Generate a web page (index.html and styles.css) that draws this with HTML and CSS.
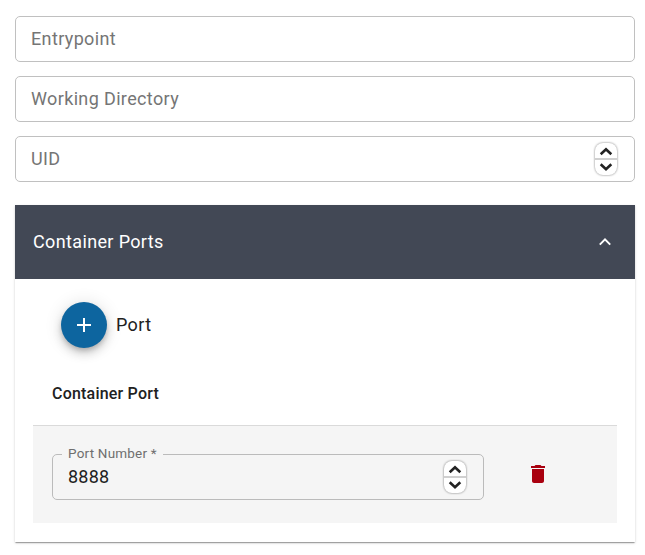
FILE: index.html
```html
<!DOCTYPE html>
<html lang="en">
<head>
<meta charset="utf-8">
<title>Container settings</title>
<link rel="stylesheet" href="styles.css">
</head>
<body>
<main class="form">
  <div class="field"><span class="label">Entrypoint</span></div>
  <div class="field"><span class="label">Working Directory</span></div>
  <div class="field">
    <span class="label">UID</span>
    <svg class="stepper" viewBox="0 0 24 34"><rect class="pill" x="1" y="1" width="22" height="32" rx="8"/><path class="divider" d="M1 17h22"/><path class="arrow" d="M6.700 12.300 12 7.200l5.300 5.100M6.700 22.200l5.300 5.100 5.300-5.100"/></svg>
  </div>
  <section class="panel">
    <header class="panel-header">
      <span>Container Ports</span>
      <svg class="chevron" viewBox="0 0 14 10"><path d="m1.800 7.600 5.200-5.200 5.200 5.200"/></svg>
    </header>
    <div class="panel-body">
      <div class="add-row">
        <button class="add" aria-label="Add port"><svg viewBox="0 0 14 14"><path d="M0 7h14M7 0v14"/></svg></button>
        <span>Port</span>
      </div>
      <div class="column-title">Container Port</div>
      <div class="port-row">
        <fieldset class="port-field">
          <legend>Port Number *</legend>
          <span class="value">8888</span>
          <svg class="stepper" viewBox="0 0 24 34"><rect class="pill" x="1" y="1" width="22" height="32" rx="8"/><path class="divider" d="M1 17h22"/><path class="arrow" d="M6.700 12.300 12 7.200l5.300 5.100M6.700 22.200l5.300 5.100 5.300-5.100"/></svg>
        </fieldset>
        <svg class="trash" viewBox="5 3 14 18"><path d="M6 19c0 1.100.9 2 2 2h8c1.100 0 2-.9 2-2V7H6v12zM19 4h-3.500l-1-1h-5l-1 1H5v2h14V4z"/></svg>
      </div>
    </div>
  </section>
</main>
</body>
</html>
```

FILE: styles.css
```css
* { box-sizing: border-box; }
body {
  margin: 0;
  background: #fff;
  color: #212121;
  font: 18px/24px Roboto, sans-serif;
  letter-spacing: 0.36px;
}
.form {
  display: flex;
  flex-direction: column;
  gap: 14px;
  padding: 16px 10px 12px 15px;
}
.field {
  display: flex;
  align-items: center;
  justify-content: space-between;
  height: 46px;
  padding: 0 16px 0 15px;
  border: 1px solid #c0c0c0;
  border-radius: 5px;
}
.label { color: #757575; }
.stepper {
  width: 24px;
  height: 34px;
  overflow: visible;
  fill: none;
}
.pill { fill: #fff; filter: drop-shadow(0 0 1px rgba(0, 0, 0, .5)); }
.divider { stroke: #d0d0d0; stroke-width: 2; }
.arrow { stroke: #222; stroke-width: 2.6; }
.panel {
  margin-top: 9px;
  background: #fff;
  box-shadow: 0 2px 1px -1px rgba(0, 0, 0, .2), 0 1px 1px rgba(0, 0, 0, .14), 0 1px 3px rgba(0, 0, 0, .12);
}
.panel-header {
  display: flex;
  align-items: center;
  justify-content: space-between;
  height: 74px;
  padding: 0 23px 0 18px;
  background: #424855;
  color: #fff;
}
.chevron { width: 14px; height: 10px; fill: none; stroke: #fff; stroke-width: 2; }
.panel-body { padding: 23px 18px 19px; }
.add-row {
  display: flex;
  align-items: center;
  gap: 9px;
  height: 46px;
  padding-left: 28px;
}
.add {
  display: grid;
  place-items: center;
  width: 46px;
  height: 46px;
  padding: 0;
  border: 0;
  border-radius: 50%;
  background: #0d659f;
  box-shadow: 0 3px 5px -1px rgba(0, 0, 0, .2), 0 6px 10px rgba(0, 0, 0, .14), 0 1px 18px rgba(0, 0, 0, .12);
}
.add svg { width: 14px; height: 14px; stroke: #fff; stroke-width: 2; }
.column-title {
  margin-top: 14px;
  height: 64px;
  padding-left: 19px;
  border-bottom: 1px solid #dadada;
  font-size: 16px;
  font-weight: 500;
  letter-spacing: 0.2px;
  line-height: 63px;
}
.port-row {
  display: flex;
  align-items: flex-start;
  height: 97px;
  padding: 20px 19px 0;
  background: #f5f5f5;
}
.port-field {
  display: flex;
  align-items: center;
  justify-content: space-between;
  width: 432px;
  height: 54px;
  margin: 0;
  padding: 0 16px 8px 15px;
  border: 1px solid #bbb;
  border-radius: 5px;
}
.port-field legend {
  height: 16px;
  margin-left: -6px;
  padding: 0 6px;
  color: #6f6f6f;
  font-size: 13.5px;
  letter-spacing: 0.2px;
  line-height: 15px;
}
.value { letter-spacing: 0.25px; }
.trash { width: 14px; height: 18px; margin: 19px 0 0 47px; fill: #a9000f; }
```
